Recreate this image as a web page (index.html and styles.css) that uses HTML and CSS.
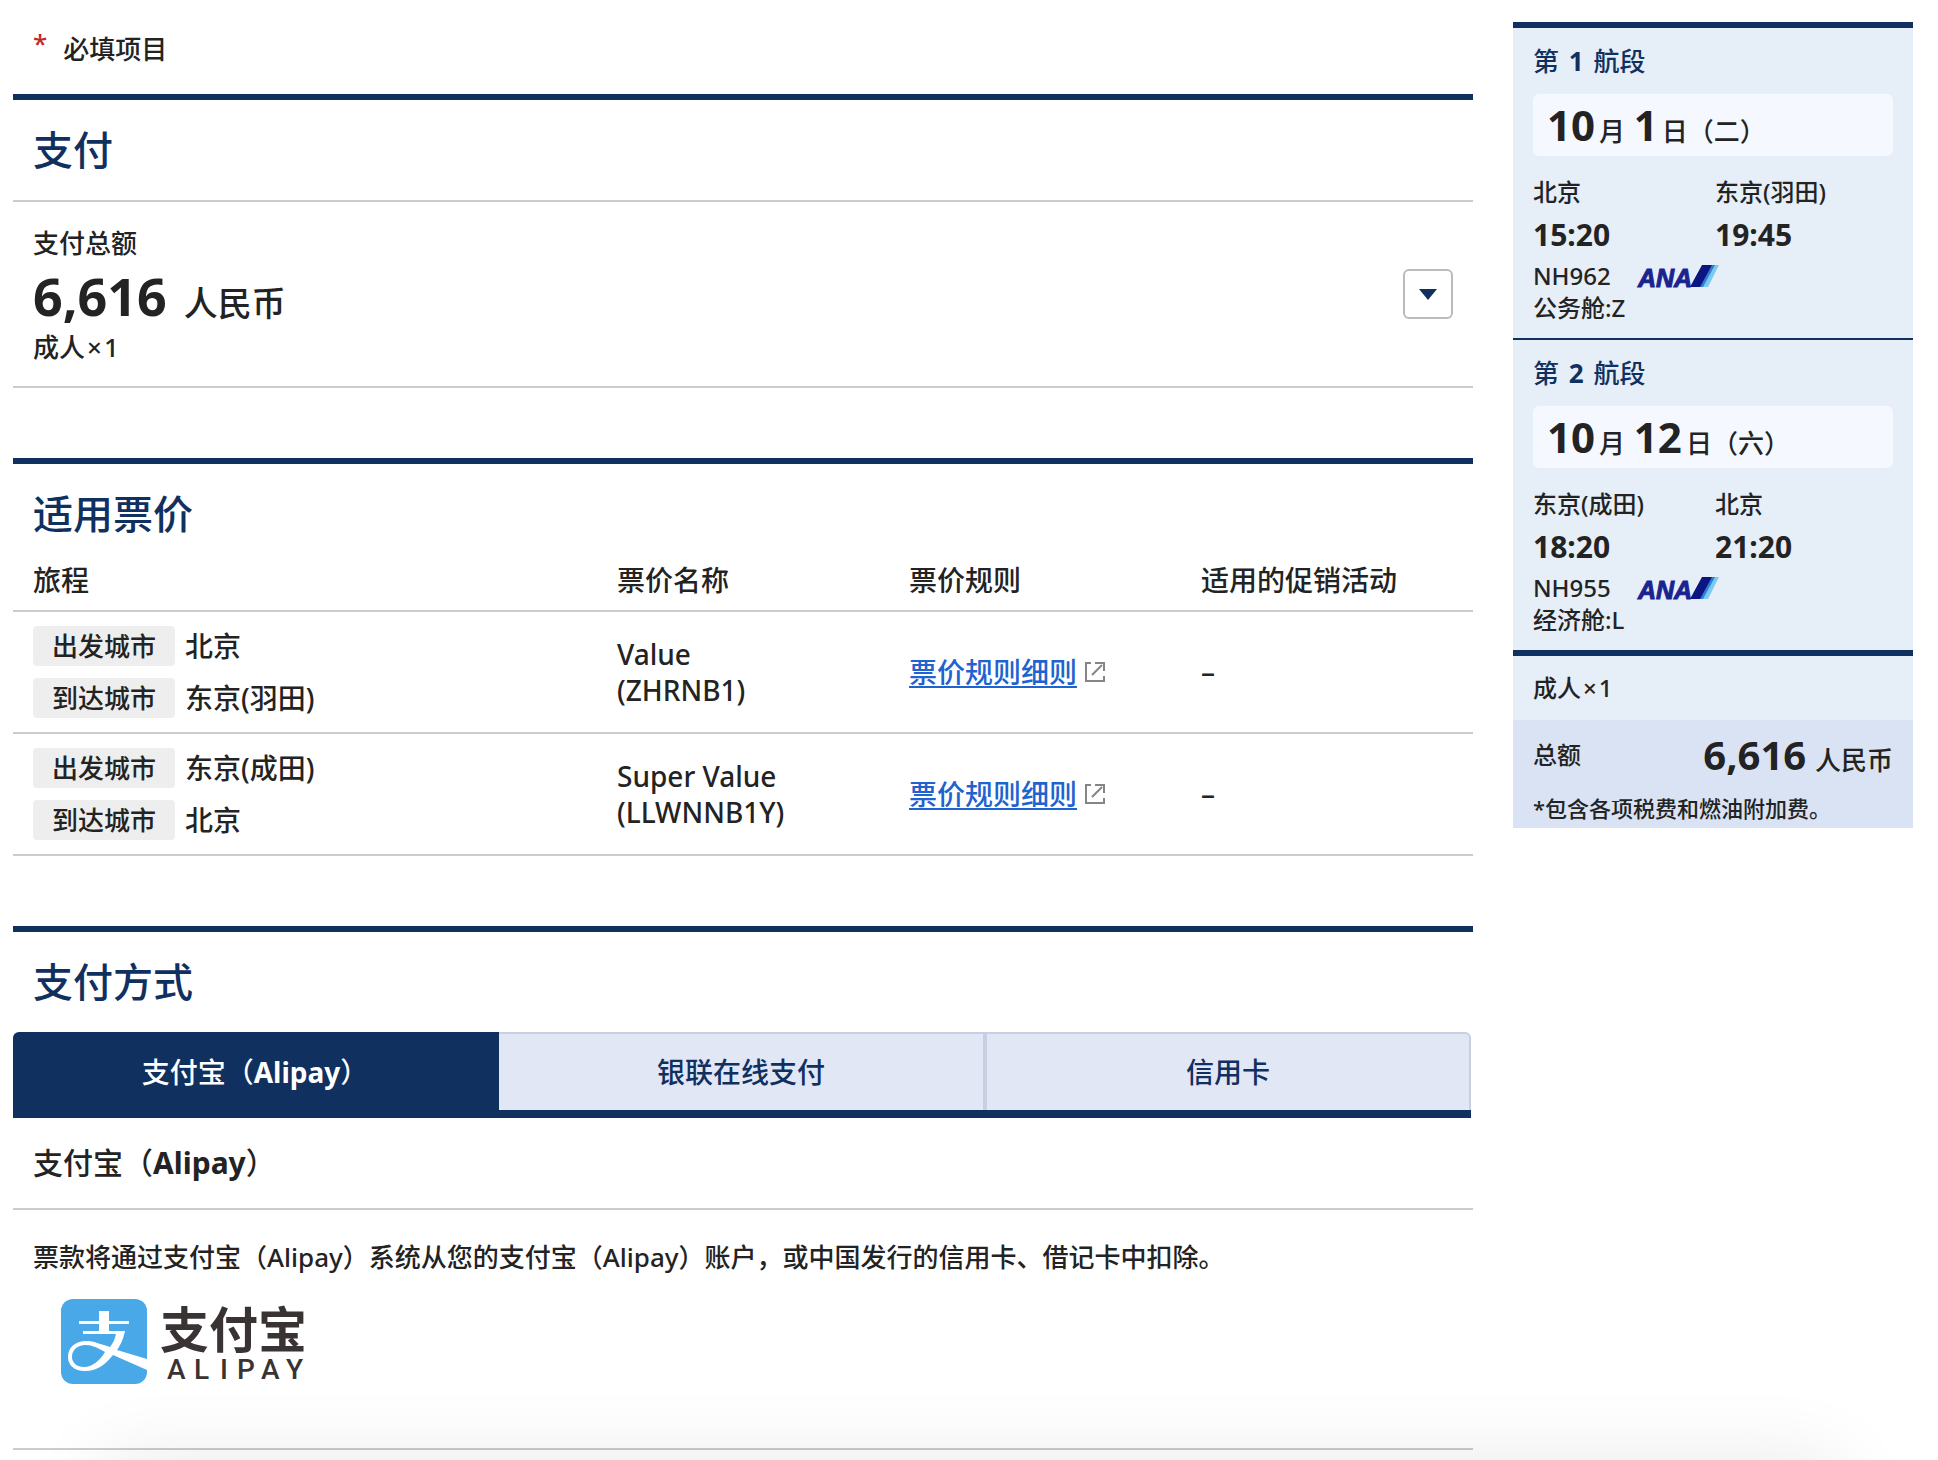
FILE: index.html
```html
<!DOCTYPE html>
<html lang="zh-CN">
<head>
<meta charset="utf-8">
<meta name="viewport" content="width=device-width, initial-scale=1">
<title>支付</title>
<link rel="stylesheet" href="styles.css">
</head>
<body>
<div class="page">
  <main class="main">
    <p class="required"><span class="required-mark">*</span>必填项目</p>

    <section class="section">
      <h2 class="section-title section-title-lined">支付</h2>
      <div class="payment">
        <div>
          <p class="payment-label">支付总额</p>
          <p class="payment-amount"><strong>6,616</strong> <span>人民币</span></p>
          <p class="payment-people">成人<span class="times">×</span>1</p>
        </div>
        <button class="toggle" type="button" aria-label="展开明细">
          <svg width="18" height="11" viewBox="0 0 18 11"><path d="M0 0H18L9 11Z" fill="#10305f"/></svg>
        </button>
      </div>
    </section>

    <section class="section">
      <h2 class="section-title">适用票价</h2>
      <table class="fares">
        <thead>
          <tr><th class="col-trip">旅程</th><th>票价名称</th><th>票价规则</th><th>适用的促销活动</th></tr>
        </thead>
        <tbody>
          <tr>
            <td>
              <div class="stops">
                <div class="stop"><span class="chip">出发城市</span>北京</div>
                <div class="stop"><span class="chip">到达城市</span>东京(羽田)</div>
              </div>
            </td>
            <td>Value<br>(ZHRNB1)</td>
            <td><div class="rule"><a href="#">票价规则细则</a><svg class="external" width="20" height="20" viewBox="0 0 20 20"><path d="M6 1H1V19H19V14M10 1H19V9M7 13L17 3"/></svg></div></td>
            <td>–</td>
          </tr>
          <tr>
            <td>
              <div class="stops">
                <div class="stop"><span class="chip">出发城市</span>东京(成田)</div>
                <div class="stop"><span class="chip">到达城市</span>北京</div>
              </div>
            </td>
            <td>Super Value<br>(LLWNNB1Y)</td>
            <td><div class="rule"><a href="#">票价规则细则</a><svg class="external" width="20" height="20" viewBox="0 0 20 20"><path d="M6 1H1V19H19V14M10 1H19V9M7 13L17 3"/></svg></div></td>
            <td>–</td>
          </tr>
        </tbody>
      </table>
    </section>

    <section class="section">
      <h2 class="section-title">支付方式</h2>
      <div class="tabs" role="tablist">
        <button class="tab tab-active" type="button" role="tab" aria-selected="true">支付宝（<b>Alipay</b>）</button>
        <button class="tab" type="button" role="tab" aria-selected="false">银联在线支付</button>
        <button class="tab" type="button" role="tab" aria-selected="false">信用卡</button>
      </div>
      <h3 class="method-title">支付宝（<b>Alipay</b>）</h3>
      <div class="method">
        <p>票款将通过支付宝（Alipay）系统从您的支付宝（Alipay）账户，或中国发行的信用卡、借记卡中扣除。</p>
        <svg class="alipay" width="250" height="86" viewBox="0 0 250 86" role="img" aria-label="支付宝 ALIPAY">
          <rect width="86" height="85" rx="12" fill="#48a8e8"/>
          <path fill="#fff" d="M38 12H48V22H68V25H48V32H64C62 41 59 47 56 51L86 60V71L52 56C44 66 36 72 24 72C13 72 7 66 7 58C7 47 16 41 28 42C35 43 42 46 49 48C52 44 54 40 55 35H22V32H38V25H18V22H38ZM44 53C37 49 31 46 25 46C16 46 11 51 11 58C11 64 16 68 23 68C32 68 39 61 44 53Z"/>
          <text class="alipay-cn" x="99" y="49">支付宝</text>
          <text class="alipay-en" x="106 133 159 176 200 225" y="80">ALIPAY</text>
        </svg>
      </div>
    </section>
  </main>

  <aside class="summary">
    <section class="leg">
      <h3 class="leg-title">第 <b>1</b> 航段</h3>
      <p class="leg-date"><strong>10</strong>月 <strong>1</strong>日（二）</p>
      <div class="leg-points">
        <div><p class="leg-city">北京</p><p class="leg-time">15:20</p></div>
        <div><p class="leg-city">东京(羽田)</p><p class="leg-time">19:45</p></div>
      </div>
      <p class="leg-flight">NH962
        <svg class="ana" width="82" height="22" viewBox="0 0 82 22" role="img" aria-label="ANA">
          <text class="ana-word" x="1" y="22">ANA</text>
          <path fill="#0c1582" d="M65 0H76L64 22H53Z"/>
          <path fill="#2f7fd0" d="M75 0H79L67 22H63Z"/>
          <path fill="#7cc9f2" d="M78 0H82L71 22H66Z"/>
        </svg>
      </p>
      <p class="leg-cabin">公务舱:Z</p>
    </section>
    <section class="leg">
      <h3 class="leg-title">第 <b>2</b> 航段</h3>
      <p class="leg-date"><strong>10</strong>月 <strong>12</strong>日（六）</p>
      <div class="leg-points">
        <div><p class="leg-city">东京(成田)</p><p class="leg-time">18:20</p></div>
        <div><p class="leg-city">北京</p><p class="leg-time">21:20</p></div>
      </div>
      <p class="leg-flight">NH955
        <svg class="ana" width="82" height="22" viewBox="0 0 82 22" role="img" aria-label="ANA">
          <text class="ana-word" x="1" y="22">ANA</text>
          <path fill="#0c1582" d="M65 0H76L64 22H53Z"/>
          <path fill="#2f7fd0" d="M75 0H79L67 22H63Z"/>
          <path fill="#7cc9f2" d="M78 0H82L71 22H66Z"/>
        </svg>
      </p>
      <p class="leg-cabin">经济舱:L</p>
    </section>
    <p class="summary-people">成人<span class="times">×</span>1</p>
    <div class="total">
      <div class="total-row"><span class="total-label">总额</span><span class="total-amount"><strong>6,616</strong> 人民币</span></div>
      <p class="total-note">*包含各项税费和燃油附加费。</p>
    </div>
  </aside>
</div>
<div class="dock" aria-hidden="true"></div>
</body>
</html>
```

FILE: styles.css
```css
* {
  box-sizing: border-box;
}

body {
  margin: 0;
  background: #fff;
  color: #232323;
  font-family: "Noto Sans", "Noto Sans CJK SC", sans-serif;
  font-size: 26px;
  font-weight: 500;
  line-height: 36px;
}

h2, h3, p {
  margin: 0;
}

button {
  font: inherit;
  cursor: pointer;
}

strong, b {
  font-weight: 700;
}

strong {
  line-height: 1;
}

svg {
  flex: none;
  overflow: visible;
}

.times {
  margin: 0 2px;
}

.page {
  display: flex;
  align-items: flex-start;
  gap: 40px;
  padding: 0 25px 10px 13px;
}

.main {
  flex: 1;
  min-width: 0;
}

.required {
  display: flex;
  gap: 16px;
  padding: 31px 20px 27px;
}

.required-mark {
  color: #c1272d;
  line-height: 24px;
}

.section {
  border-top: 6px solid #10305f;
}

.section + .section {
  margin-top: 70px;
}

.section-title {
  padding: 20px 20px 0;
  color: #10305f;
  font-size: 40px;
  font-weight: 500;
  line-height: 60px;
}

.section-title-lined {
  padding-bottom: 20px;
  border-bottom: 2px solid #ccc;
}

.payment {
  display: flex;
  align-items: center;
  justify-content: space-between;
  padding: 23px 20px;
  border-bottom: 2px solid #ccc;
}

.payment-amount {
  margin-top: 9px;
  font-size: 34px;
  line-height: 56px;
}

.payment-amount strong {
  margin-right: 8px;
  font-size: 52px;
}

.payment-people {
  line-height: 32px;
}

.toggle {
  display: grid;
  place-items: center;
  width: 50px;
  height: 50px;
  padding: 0;
  border: 2px solid #bbb;
  border-radius: 6px;
  background: #fff;
}

.fares {
  width: 100%;
  table-layout: fixed;
  border-spacing: 0;
  font-size: 28px;
}

.fares th {
  padding: 18px 20px 12px;
  border-bottom: 2px solid #ccc;
  font-weight: 500;
  text-align: left;
}

.fares .col-trip {
  width: 40%;
}

.fares td {
  padding: 14px 20px;
  border-bottom: 2px solid #ccc;
  vertical-align: middle;
}

.stops {
  display: grid;
  gap: 12px;
}

.stop {
  display: flex;
  align-items: center;
  gap: 10px;
}

.chip {
  width: 142px;
  border-radius: 4px;
  background: #eee;
  font-size: 26px;
  line-height: 40px;
  text-align: center;
}

.rule {
  display: flex;
  align-items: center;
  gap: 8px;
}

.rule a {
  color: #1f63cf;
  text-decoration-thickness: 2px;
  text-underline-offset: 3px;
}

.external {
  fill: none;
  stroke: #858585;
  stroke-width: 2;
}

.tabs {
  display: grid;
  grid-template-columns: repeat(3, 1fr);
  margin: 20px 2px 0 0;
  border-bottom: 8px solid #10305f;
}

.tab {
  padding: 19px 0;
  border: 2px solid #c8cfe2;
  border-width: 2px 2px 0 0;
  background: #e1e7f5;
  color: #10305f;
  font-size: 28px;
  line-height: 38px;
}

.tab:last-child {
  border-left-width: 2px;
  border-radius: 0 6px 0 0;
}

.tab-active {
  border-color: #10305f;
  border-radius: 6px 0 0 0;
  background: #10305f;
  color: #fff;
}

.method-title {
  padding: 27px 20px;
  border-bottom: 2px solid #ccc;
  font-size: 30px;
  font-weight: 500;
}

.method {
  padding: 29px 20px 63px;
  border-bottom: 2px solid #ccc;
}

.alipay {
  display: block;
  margin: 24px 0 0 28px;
}

.alipay-cn {
  fill: #3a3333;
  font-size: 49px;
  font-weight: 700;
}

.alipay-en {
  fill: #3a3333;
  font-family: Roboto, sans-serif;
  font-size: 28px;
  font-weight: 500;
}

.summary {
  flex: 0 0 400px;
  margin-top: 22px;
  border-top: 6px solid #10305f;
  background: #e6eef8;
  font-size: 24px;
}

.leg {
  padding: 15px 20px 14px;
  border-bottom: 2px solid #10305f;
}

.leg + .leg {
  border-bottom-width: 6px;
}

.leg-title {
  margin-bottom: 15px;
  color: #10305f;
  font-size: 26px;
  font-weight: 500;
}

.leg-title b {
  margin: 0 3px;
}

.leg-date {
  margin-bottom: 18px;
  padding: 10px 12px;
  border-radius: 6px;
  background: #f5f8fe;
  font-size: 26px;
  line-height: 30px;
}

.leg-date strong {
  margin: 0 4px 0 2px;
  font-size: 42px;
}

.leg-points {
  display: grid;
  grid-template-columns: 1fr 1fr;
  column-gap: 4px;
}

.leg-time {
  font-size: 30px;
  font-weight: 700;
  line-height: 50px;
}

.leg-flight {
  display: flex;
  align-items: center;
  gap: 26px;
  line-height: 32px;
}

.leg-cabin {
  line-height: 32px;
}

.ana-word {
  fill: #1a2390;
  stroke: #1a2390;
  stroke-width: 1;
  font-family: "Liberation Sans", sans-serif;
  font-size: 25px;
  font-style: italic;
  font-weight: 700;
}

.summary-people {
  padding: 0 20px;
  line-height: 64px;
}

.total {
  padding: 0 20px 2px;
  background: #dae3f4;
}

.total-row {
  display: flex;
  align-items: center;
  justify-content: space-between;
  min-height: 70px;
}

.total-amount {
  font-size: 26px;
  line-height: 30px;
}

.total-amount strong {
  margin-right: 2px;
  font-size: 40px;
}

.total-note {
  font-size: 22px;
}

.dock {
  position: fixed;
  top: 100%;
  right: 100px;
  left: 100px;
  height: 80px;
  box-shadow: 0 0 80px rgba(0, 0, 0, 0.09);
}
```
